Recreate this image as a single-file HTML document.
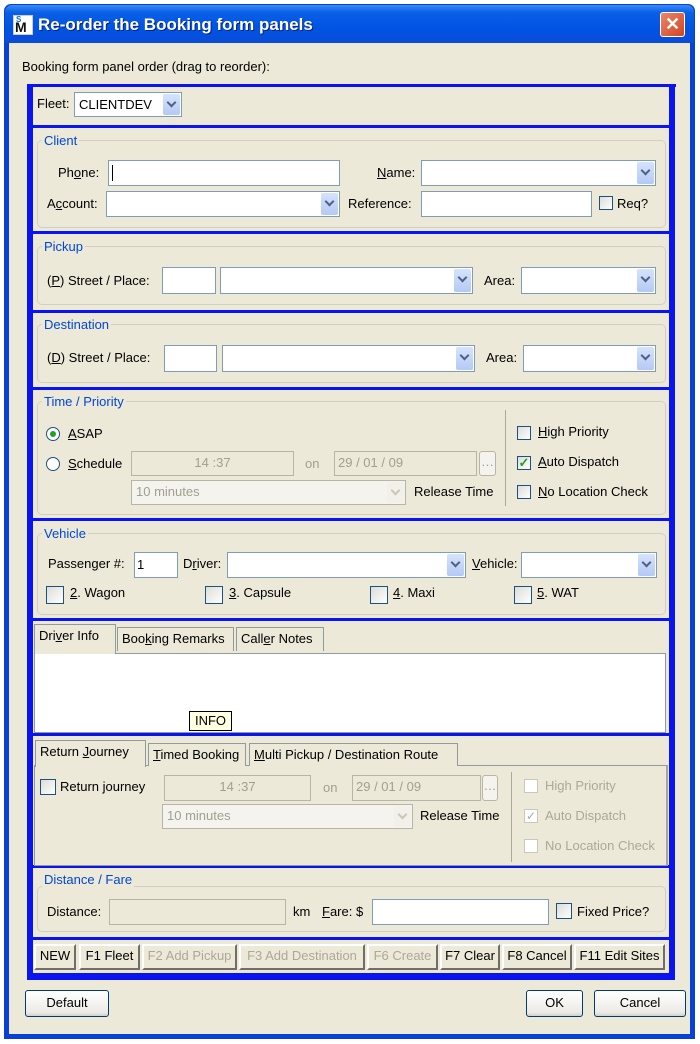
<!DOCTYPE html>
<html><head><meta charset="utf-8"><style>
*{box-sizing:border-box;margin:0;padding:0}
body{width:700px;height:1044px;background:#fff;position:relative;overflow:hidden;font-family:"Liberation Sans",sans-serif;font-size:13px;color:#000}
div,span{position:absolute}
.t{white-space:nowrap;line-height:16px}
.in{background:#fff;border:1px solid #7F9DB9}
.dis{background:#ECE9D8;border:1px solid #B8B5A6;color:#A0A08E;text-align:center;line-height:22px}
.bt{position:absolute;right:1px;top:1px;bottom:1px;width:17px;background:linear-gradient(#D6E3FC,#B4C9F5);border-radius:2px}
.bt:after{content:"";position:absolute;left:5px;top:5px;width:5px;height:5px;border-right:2px solid #4D6185;border-bottom:2px solid #4D6185;transform:rotate(45deg)}
.btd{background:#F2F0E8}.btd:after{border-color:#C9C7BA}
.gb{border:1px solid #D0D0BF;border-radius:5px}
.gt{color:#0046D5;background:#ECE9D8;padding:0 2px;line-height:14px}
.ck{width:14px;height:14px;border:1px solid #1C5180;background:linear-gradient(135deg,#DCDCD7,#fff)}
.ckd{border-color:#CAC8BB;background:#fff}
.rd{width:14px;height:14px;border:1px solid #1C5180;border-radius:50%;background:#fff}
.blue{background:#0A14F0}
.tab{border:1px solid #919B9C;border-bottom:none;background:#F4F3EE;line-height:22px;padding-left:4px;white-space:nowrap}
.fb{border:2px solid;border-color:#fff #716F64 #716F64 #fff;background:#ECE9D8;line-height:20px;text-align:center;white-space:nowrap;height:26px}
.fd{color:#ACA899}
.btn{border:1px solid #003C74;border-radius:3px;background:linear-gradient(#fff,#ECEBE6 85%,#D6D0C5);text-align:center;line-height:24px}
u{text-decoration:underline}
</style></head><body>
<div style="left:4px;top:4px;width:691px;height:1035px;background:#0841D6;border-radius:7px 7px 0 0"></div>
<div style="left:5px;top:5px;width:689px;height:38px;background:linear-gradient(#3A8CF6,#0A5FE6 20%,#0054E3 60%,#0A4CD8);border-radius:7px 7px 0 0"></div>
<div style="left:9px;top:43px;width:681px;height:991px;background:#ECE9D8"></div>
<div style="left:13px;top:15px;width:20px;height:20px;background:#fff;border:1px solid #ccc"><span style="left:2px;top:-1px;font-size:8px;color:#0a6ad8;font-weight:bold">S</span><span style="left:1px;top:3px;font-size:14px;font-weight:bold;color:#111">M</span></div>
<div class="t" style="left:38px;top:15px;color:#fff;font-weight:bold;font-size:17px;line-height:20px;text-shadow:1px 1px #0A1F80">Re-order the Booking form panels</div>
<div style="left:660px;top:12px;width:25px;height:25px;background:linear-gradient(135deg,#E9876A,#D44420);border:1px solid #fff;border-radius:3px;color:#fff;font-weight:bold;font-size:18px;line-height:22px;text-align:center">✕</div>

<div class="t" style="left:22px;top:59px">Booking form panel order (drag to reorder):</div>

<div class="blue" style="left:27px;top:84px;width:649px;height:3px"></div>
<div class="blue" style="left:27px;top:84px;width:6px;height:896px"></div>
<div class="blue" style="left:669px;top:84px;width:6px;height:896px"></div>
<div class="blue" style="left:27px;top:973px;width:648px;height:7px"></div>
<div class="blue" style="left:33px;top:125px;width:636px;height:3px"></div>
<div class="blue" style="left:33px;top:231px;width:636px;height:3px"></div>
<div class="blue" style="left:33px;top:310px;width:636px;height:3px"></div>
<div class="blue" style="left:33px;top:387px;width:636px;height:3px"></div>
<div class="blue" style="left:33px;top:518px;width:636px;height:3px"></div>
<div class="blue" style="left:33px;top:618px;width:636px;height:3px"></div>
<div class="blue" style="left:33px;top:733px;width:636px;height:3px"></div>
<div class="blue" style="left:33px;top:865px;width:636px;height:3px"></div>
<div class="blue" style="left:33px;top:937px;width:636px;height:3px"></div>

<div class="t" style="left:37px;top:96px">Fleet:</div>
<div class="in" style="left:74px;top:92px;width:108px;height:25px"><span class="t" style="left:4px;top:4px">CLIENTDEV</span><span class="bt"></span></div>

<div class="gb" style="left:37px;top:140px;width:629px;height:88px"></div>
<div class="t gt" style="left:42px;top:134px">Client</div>
<div class="t" style="left:58px;top:165px">Ph<u>o</u>ne:</div>
<div class="in" style="left:108px;top:160px;width:232px;height:26px"><span style="left:3px;top:4px;width:1px;height:16px;background:#000"></span></div>
<div class="t" style="left:377px;top:165px"><u>N</u>ame:</div>
<div class="in" style="left:421px;top:160px;width:235px;height:26px"><span class="bt"></span></div>
<div class="t" style="left:47px;top:196px">A<u>c</u>count:</div>
<div class="in" style="left:106px;top:191px;width:234px;height:26px"><span class="bt"></span></div>
<div class="t" style="left:348px;top:196px">Reference:</div>
<div class="in" style="left:421px;top:191px;width:171px;height:26px"></div>
<div class="ck" style="left:599px;top:196px"></div>
<div class="t" style="left:617px;top:196px">Req?</div>

<div class="gb" style="left:37px;top:246px;width:629px;height:59px"></div>
<div class="t gt" style="left:42px;top:240px">Pickup</div>
<div class="t" style="left:47px;top:273px">(<u>P</u>) Street / Place:</div>
<div class="in" style="left:162px;top:267px;width:54px;height:27px"></div>
<div class="in" style="left:220px;top:267px;width:253px;height:27px"><span class="bt"></span></div>
<div class="t" style="left:484px;top:273px">Area:</div>
<div class="in" style="left:521px;top:267px;width:135px;height:27px"><span class="bt"></span></div>

<div class="gb" style="left:37px;top:324px;width:629px;height:59px"></div>
<div class="t gt" style="left:42px;top:318px">Destination</div>
<div class="t" style="left:47px;top:350px">(<u>D</u>) Street / Place:</div>
<div class="in" style="left:164px;top:345px;width:53px;height:27px"></div>
<div class="in" style="left:222px;top:345px;width:253px;height:27px"><span class="bt"></span></div>
<div class="t" style="left:486px;top:350px">Area:</div>
<div class="in" style="left:523px;top:345px;width:133px;height:27px"><span class="bt"></span></div>

<div class="gb" style="left:37px;top:401px;width:629px;height:114px"></div>
<div class="t gt" style="left:42px;top:395px">Time / Priority</div>
<div class="rd" style="left:46px;top:427px"><span style="left:3px;top:3px;width:6px;height:6px;border-radius:50%;background:#21A121"></span></div>
<div class="t" style="left:68px;top:426px"><u>A</u>SAP</div>
<div class="rd" style="left:46px;top:457px"></div>
<div class="t" style="left:68px;top:456px"><u>S</u>chedule</div>
<div class="dis" style="left:131px;top:451px;width:163px;height:25px">14 :37</div>
<div class="t" style="left:305px;top:456px;color:#A0A08E">on</div>
<div class="dis" style="left:334px;top:451px;width:143px;height:25px;text-align:left;padding-left:3px">29 / 01 / 09</div>
<div style="left:479px;top:451px;width:17px;height:25px;border:1px solid #B8B5A6;border-radius:3px;background:#F4F3EE;color:#A0A08E;text-align:center;line-height:20px">…</div>
<div class="dis" style="left:131px;top:480px;width:275px;height:25px;text-align:left;padding-left:4px;background:#F4F3EE"><span class="bt btd"></span>10 minutes</div>
<div class="t" style="left:414px;top:484px">Release Time</div>
<div style="left:505px;top:410px;width:1px;height:96px;background:#ACA899"></div>
<div class="ck" style="left:517px;top:426px"></div>
<div class="t" style="left:538px;top:424px"><u>H</u>igh Priority</div>
<div class="ck" style="left:517px;top:456px;color:#21A121;font-size:13px;line-height:12px;text-align:center;font-weight:bold">✓</div>
<div class="t" style="left:538px;top:454px"><u>A</u>uto Dispatch</div>
<div class="ck" style="left:517px;top:485px"></div>
<div class="t" style="left:538px;top:484px"><u>N</u>o Location Check</div>

<div class="gb" style="left:37px;top:533px;width:629px;height:82px"></div>
<div class="t gt" style="left:42px;top:527px">Vehicle</div>
<div class="t" style="left:48px;top:556px">Passen<u>g</u>er #:</div>
<div class="in" style="left:134px;top:552px;width:44px;height:26px"><span class="t" style="left:2px;top:4px">1</span></div>
<div class="t" style="left:183px;top:556px">D<u>r</u>iver:</div>
<div class="in" style="left:227px;top:552px;width:239px;height:26px"><span class="bt"></span></div>
<div class="t" style="left:472px;top:556px"><u>V</u>ehicle:</div>
<div class="in" style="left:521px;top:552px;width:136px;height:26px"><span class="bt"></span></div>
<div class="ck" style="left:46px;top:586px;width:18px;height:18px"></div><div class="t" style="left:70px;top:585px"><u>2</u>. Wagon</div>
<div class="ck" style="left:205px;top:586px;width:18px;height:18px"></div><div class="t" style="left:229px;top:585px"><u>3</u>. Capsule</div>
<div class="ck" style="left:370px;top:586px;width:18px;height:18px"></div><div class="t" style="left:393px;top:585px"><u>4</u>. Maxi</div>
<div class="ck" style="left:514px;top:586px;width:18px;height:18px"></div><div class="t" style="left:537px;top:585px"><u>5</u>. WAT</div>

<div class="tab" style="left:117px;top:627px;width:117px;height:24px;background:#ECE9D8">Boo<u>k</u>ing Remarks</div>
<div class="tab" style="left:236px;top:627px;width:88px;height:24px;background:#ECE9D8">Call<u>e</u>r Notes</div>
<div class="tab" style="left:34px;top:624px;width:82px;height:30px;background:#ECE9D8;z-index:2">Dri<u>v</u>er Info</div>
<div style="left:34px;top:653px;width:632px;height:80px;background:#fff;border:1px solid #919B9C"></div>
<div style="left:189px;top:711px;width:43px;height:20px;background:#FFFFE1;border:1px solid #000;text-align:center;line-height:18px;z-index:3">INFO</div>

<div style="left:34px;top:765px;width:634px;height:101px;background:#ECE9D8;border:1px solid #919B9C;border-right:2px solid #A7A69C"></div>
<div class="tab" style="left:148px;top:743px;width:98px;height:23px;background:#ECE9D8"><u>T</u>imed Booking</div>
<div class="tab" style="left:249px;top:743px;width:209px;height:23px;background:#ECE9D8"><u>M</u>ulti Pickup / Destination Route</div>
<div class="tab" style="left:35px;top:740px;width:111px;height:27px;background:#ECE9D8;z-index:2">Return <u>J</u>ourney</div>
<div class="ck" style="left:40px;top:779px;width:16px;height:16px"></div>
<div class="t" style="left:60px;top:779px">Return journey</div>
<div class="dis" style="left:164px;top:775px;width:147px;height:26px">14 :37</div>
<div class="t" style="left:323px;top:780px;color:#A0A08E">on</div>
<div class="dis" style="left:352px;top:775px;width:129px;height:26px;text-align:left;padding-left:3px">29 / 01 / 09</div>
<div style="left:482px;top:775px;width:16px;height:26px;border:1px solid #B8B5A6;border-radius:3px;background:#F4F3EE;color:#A0A08E;text-align:center;line-height:20px">…</div>
<div class="dis" style="left:162px;top:804px;width:251px;height:25px;text-align:left;padding-left:4px;background:#F4F3EE"><span class="bt btd"></span>10 minutes</div>
<div class="t" style="left:420px;top:808px">Release Time</div>
<div style="left:511px;top:772px;width:1px;height:90px;background:#ACA899"></div>
<div class="ck ckd" style="left:524px;top:779px"></div><div class="t" style="left:545px;top:778px;color:#ACA899">High Priority</div>
<div class="ck ckd" style="left:524px;top:809px;color:#ACA899;font-size:12px;line-height:12px;text-align:center">✓</div><div class="t" style="left:545px;top:808px;color:#ACA899">Auto Dispatch</div>
<div class="ck ckd" style="left:524px;top:839px"></div><div class="t" style="left:545px;top:838px;color:#ACA899">No Location Check</div>

<div class="gb" style="left:37px;top:886px;width:629px;height:46px"></div>
<div class="t gt" style="left:42px;top:873px">Distance / Fare</div>
<div class="t" style="left:47px;top:904px">Distance:</div>
<div class="dis" style="left:109px;top:899px;width:177px;height:26px"></div>
<div class="t" style="left:293px;top:904px">km</div>
<div class="t" style="left:322px;top:904px"><u>F</u>are: $</div>
<div class="in" style="left:372px;top:899px;width:177px;height:26px"></div>
<div class="ck" style="left:556px;top:903px;width:16px;height:16px"></div>
<div class="t" style="left:577px;top:904px">Fixed Price?</div>

<div class="fb" style="left:34px;top:944px;width:42px">NEW</div>
<div class="fb" style="left:79px;top:944px;width:61px">F1 Fleet</div>
<div class="fb fd" style="left:142px;top:944px;width:95px">F2 Add Pickup</div>
<div class="fb fd" style="left:239px;top:944px;width:126px">F3 Add Destination</div>
<div class="fb fd" style="left:367px;top:944px;width:71px">F6 Create</div>
<div class="fb" style="left:440px;top:944px;width:60px">F7 Clear</div>
<div class="fb" style="left:502px;top:944px;width:70px">F8 Cancel</div>
<div class="fb" style="left:574px;top:944px;width:91px">F11 Edit Sites</div>

<div class="btn" style="left:25px;top:990px;width:84px;height:27px">Default</div>
<div class="btn" style="left:526px;top:990px;width:57px;height:27px">OK</div>
<div class="btn" style="left:594px;top:990px;width:92px;height:27px">Cancel</div>
</body></html>
